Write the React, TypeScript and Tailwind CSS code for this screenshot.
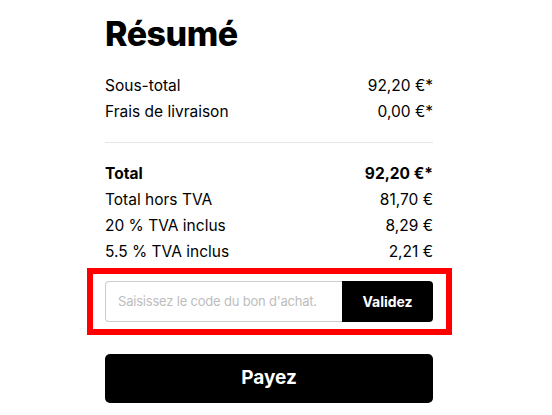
export default function App() {
  const rows1 = [
    ['Sous-total', '92,20 €*'],
    ['Frais de livraison', '0,00 €*'],
  ]
  const rows2 = [
    ['Total hors TVA', '81,70 €'],
    ['20 % TVA inclus', '8,29 €'],
    ['5.5 % TVA inclus', '2,21 €'],
  ]

  return (
    <div className="min-h-[415px] bg-white text-black" style={{ fontFamily: 'Inter, "Open Sans", sans-serif' }}>
      <div className="ml-[105px] w-[328px] pt-[14px]">
        <h1 className="text-[34px] font-extrabold leading-[40px] tracking-[-0.5px]">Résumé</h1>

        <div className="mt-[19px] text-[15.5px] leading-[26px]">
          {rows1.map(([label, value]) => (
            <div key={label} className="flex justify-between">
              <span>{label}</span>
              <span>{value}</span>
            </div>
          ))}
        </div>

        <div className="mt-[17px] h-px bg-[#e5e5e5]" />

        <div className="mt-[18px] text-[15.5px] leading-[26px]">
          <div className="flex justify-between font-bold">
            <span>Total</span>
            <span>92,20 €*</span>
          </div>
          {rows2.map(([label, value]) => (
            <div key={label} className="flex justify-between">
              <span>{label}</span>
              <span>{value}</span>
            </div>
          ))}
        </div>
      </div>

      {/* voucher code */}
      <div className="ml-[87px] mt-[3px] w-[365px] border-[6px] border-[#ff0000] px-[12px] py-[7px]">
        <div className="flex h-[41px] w-[328px]">
          <input
            placeholder="Saisissez le code du bon d'achat."
            className="min-w-0 flex-1 rounded-l-[4px] border border-r-0 border-[#cccccc] pl-[12px] pr-[4px] text-[13px] tracking-[-0.2px] outline-none placeholder:text-[#bdbdbd]"
          />
          <button className="w-[91px] rounded-r-[4px] bg-black text-[14px] font-bold text-white">
            Validez
          </button>
        </div>
      </div>

      <div className="ml-[105px] mt-[19px] w-[328px]">
        <button className="h-[49px] w-full rounded-[5px] bg-black text-[19px] font-bold text-white">
          Payez
        </button>
      </div>
    </div>
  )
}
